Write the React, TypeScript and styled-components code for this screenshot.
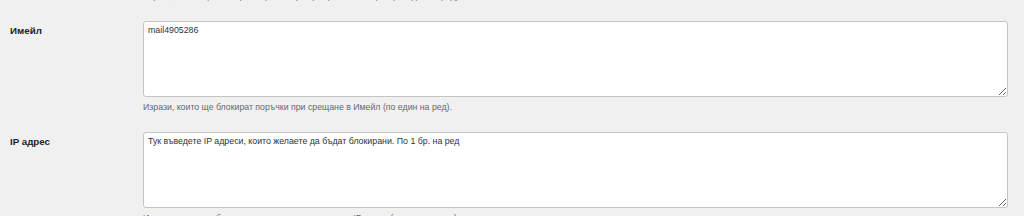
import React from 'react';
import styled, { createGlobalStyle } from 'styled-components';

const GlobalStyle = createGlobalStyle`
  html, body {
    margin: 0;
    padding: 0;
    background: #f0f0f1;
  }
  body {
    font-family: "Liberation Sans", Arial, sans-serif;
    color: #1d2327;
    overflow: hidden;
  }
`;

const Page = styled.div`
  width: 1024px;
  height: 216px;
  overflow: hidden;
  background: #f0f0f1;
`;

const FormTable = styled.div`
  display: flex;
  flex-direction: column;
  margin-top: -14px;
`;

const Row = styled.div<{ $top?: number }>`
  display: flex;
  align-items: flex-start;
  padding-top: ${(p) => p.$top ?? 18}px;
`;

const Label = styled.label`
  flex: 0 0 143px;
  box-sizing: border-box;
  padding: 3px 0 0 10px;
  font-size: 9.75px;
  font-weight: 700;
  line-height: 14px;
  color: #1d2327;
`;

const Field = styled.div`
  flex: 1;
  margin-right: 16px;
  display: flex;
  flex-direction: column;
`;

const TextArea = styled.textarea`
  box-sizing: border-box;
  width: 100%;
  height: 76px;
  margin: 0;
  padding: 2px 4px;
  border: 1px solid #c3c4c7;
  border-radius: 3px;
  background: #fff;
  color: #2c3338;
  font-family: "Liberation Sans", Arial, sans-serif;
  font-size: 8.8px;
  line-height: 12px;
  resize: vertical;
  outline: none;
`;

const Description = styled.p`
  margin: 3px 0 0;
  font-size: 8.75px;
  line-height: 14px;
  color: #646970;
`;

const Spacer = styled.div`
  flex: 0 0 143px;
`;

interface SettingRowProps {
  label: string;
  value: string;
  hint: string;
}

const SettingRow: React.FC<SettingRowProps> = ({ label, value, hint }) => (
  <Row>
    <Label>{label}</Label>
    <Field>
      <TextArea defaultValue={value} spellCheck={false} />
      <Description>{hint}</Description>
    </Field>
  </Row>
);

export default function App() {
  return (
    <Page lang="bg">
      <GlobalStyle />
      <FormTable>
        <Row $top={0}>
          <Spacer />
          <Field>
            <Description>
              Изрази, които ще блокират поръчки при срещане в Телефон (по един на ред).
            </Description>
          </Field>
        </Row>
        <SettingRow
          label="Имейл"
          value="mail4905286"
          hint="Изрази, които ще блокират поръчки при срещане в Имейл (по един на ред)."
        />
        <SettingRow
          label="IP адрес"
          value="Тук въведете IP адреси, които желаете да бъдат блокирани. По 1 бр. на ред"
          hint="Изрази, които ще блокират поръчки при срещане в IP адрес (по един на ред)."
        />
      </FormTable>
    </Page>
  );
}
